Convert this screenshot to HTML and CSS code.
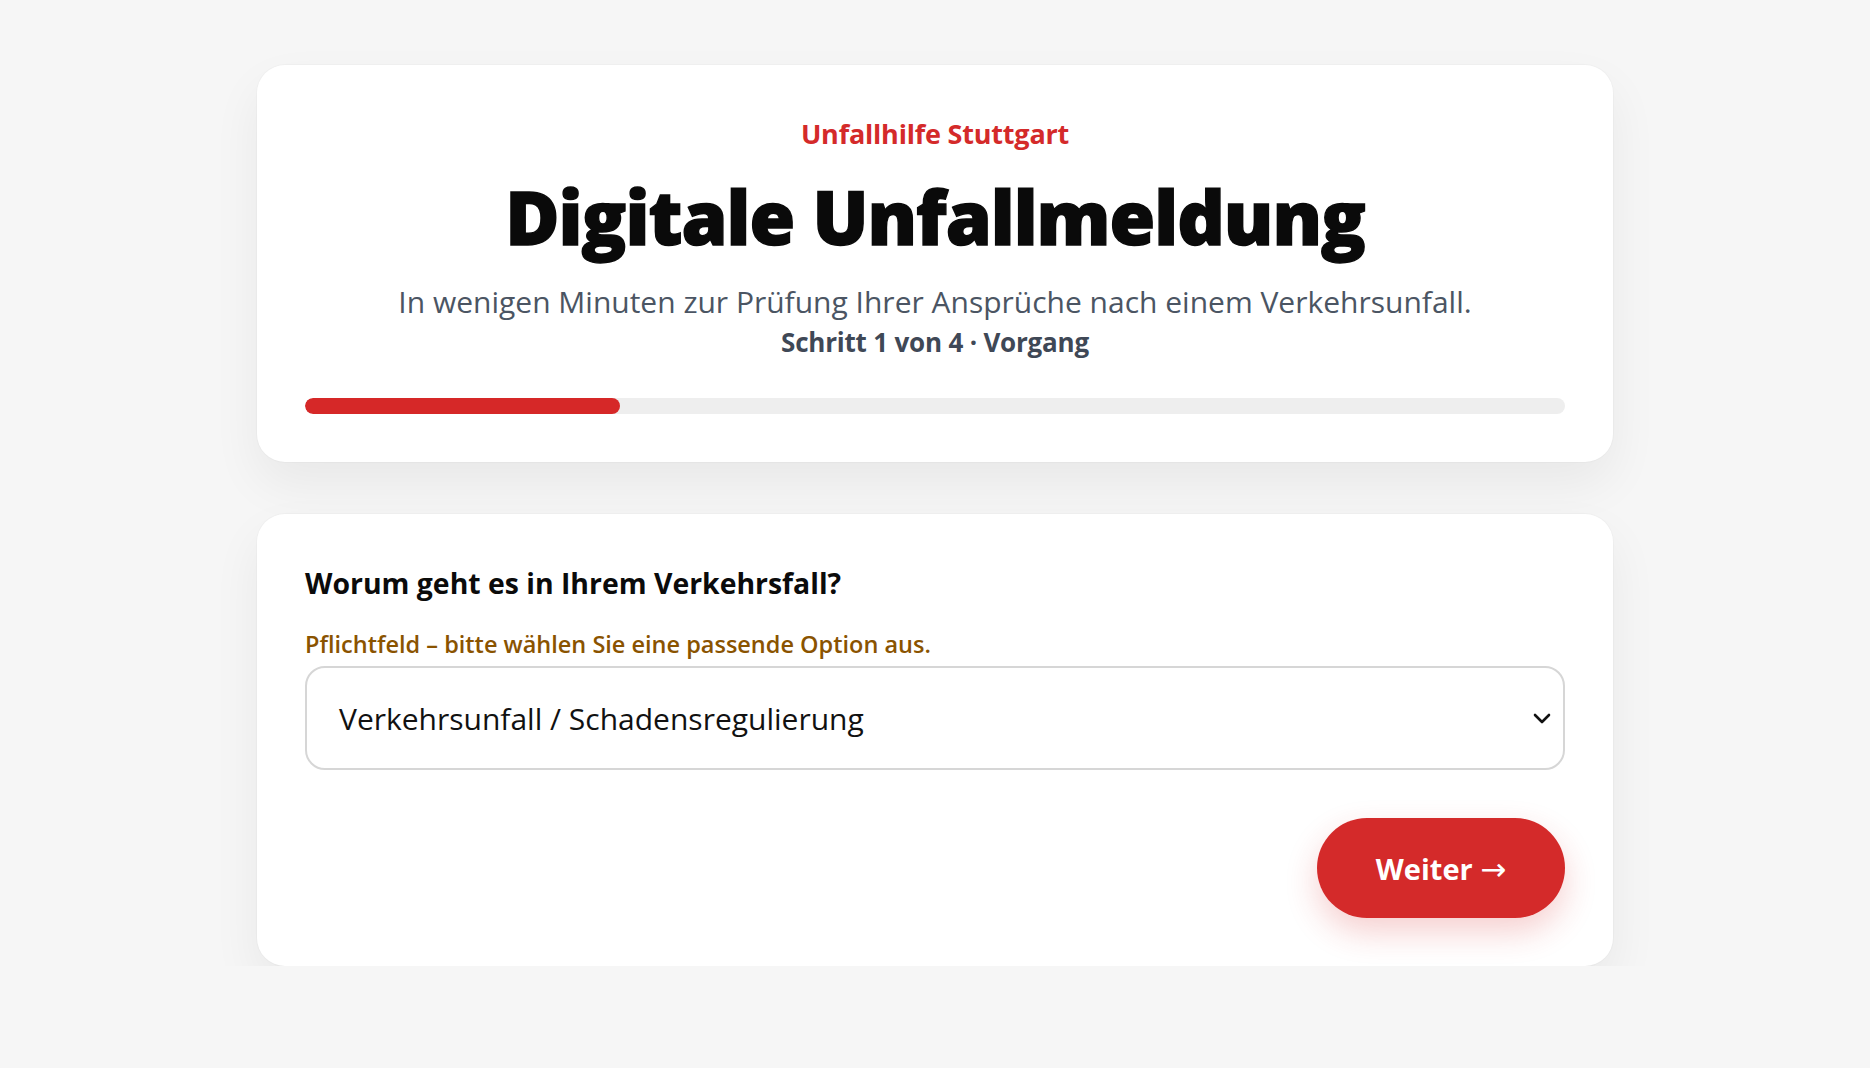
FILE: index.html
```html
<!DOCTYPE html>
<html lang="de">
<head>
<meta charset="utf-8">
<title>Digitale Unfallmeldung</title>
<link rel="stylesheet" href="styles.css">
</head>
<body>
<main class="page">
  <section class="card header-card">
    <p class="brand">Unfallhilfe Stuttgart</p>
    <h1 class="title">Digitale Unfallmeldung</h1>
    <p class="lead">In wenigen Minuten zur Prüfung Ihrer Ansprüche nach einem Verkehrsunfall.</p>
    <p class="step">Schritt 1 von 4 · Vorgang</p>
    <div class="progress"><div class="progress-fill" style="width:25%"></div></div>
  </section>
  <section class="card form-card">
    <h2 class="question">Worum geht es in Ihrem Verkehrsfall?</h2>
    <p class="hint">Pflichtfeld – bitte wählen Sie eine passende Option aus.</p>
    <div class="select">
      <span class="select-value">Verkehrsunfall / Schadensregulierung</span>
      <svg class="chevron" width="18" height="11" viewBox="0 0 18 11"><path d="M2 2 L9 9 L16 2" fill="none" stroke="#111" stroke-width="2.6" stroke-linecap="round" stroke-linejoin="round"/></svg>
    </div>
    <div class="actions">
      <button class="btn-next">Weiter <span class="arrow">→</span></button>
    </div>
  </section>
</main>
</body>
</html>
```
FILE: styles.css
```css
* { box-sizing: border-box; }
html, body { margin: 0; padding: 0; }
body {
  background: #f6f6f6;
  font-family: "Open Sans", "Noto Sans", sans-serif;
  color: #0b0b0b;
}
.page {
  width: 1356px;
  margin: 0 auto;
  padding-top: 65px;
  display: flex;
  flex-direction: column;
  gap: 52px;
}
.card {
  background: #fff;
  border-radius: 28px;
  padding: 48px;
  box-shadow: 0 22px 50px rgba(0, 0, 0, 0.06), 0 0 0 1px rgba(0,0,0,0.02);
}
.header-card {
  display: flex;
  flex-direction: column;
  align-items: center;
  text-align: center;
}
.brand {
  margin: 0;
  color: #d42a2a;
  font-weight: 700;
  font-size: 27px;
  line-height: 42px;
  letter-spacing: -0.2px;
}
.title {
  margin: 12px 0 0;
  font-weight: 800;
  font-size: 74px;
  line-height: 100px;
  letter-spacing: -1px;
  color: #0a0a0a;
  -webkit-text-stroke: 1.4px #0a0a0a;
}
.lead {
  margin: 13px 0 0;
  color: #4b5563;
  font-size: 30px;
  line-height: 44px;
}
.step {
  margin: 0;
  color: #3f4856;
  font-weight: 700;
  font-size: 26px;
  line-height: 36px;
  letter-spacing: -0.2px;
}
.progress {
  align-self: stretch;
  margin-top: 38px;
  height: 16px;
  border-radius: 8px;
  background: #eeeeee;
  overflow: hidden;
}
.progress-fill {
  height: 100%;
  background: #d62828;
  border-radius: 8px;
}
.form-card {
  display: flex;
  flex-direction: column;
}
.question {
  margin: 0;
  font-size: 28.4px;
  font-weight: 700;
  line-height: 42px;
}
.hint {
  margin: 24px 0 0;
  color: #8a5300;
  font-weight: 600;
  font-size: 23.5px;
  line-height: 32px;
}
.select {
  margin-top: 6px;
  height: 104px;
  border: 2px solid #d6d6d6;
  border-radius: 20px;
  padding: 0 12px 0 32px;
  display: flex;
  align-items: center;
  justify-content: space-between;
}
.select-value {
  font-size: 30px;
  color: #111;
}
.actions {
  margin-top: 48px;
  display: flex;
  justify-content: flex-end;
}
.btn-next {
  width: 248px;
  height: 100px;
  border: none;
  border-radius: 50px;
  background: #d42a2a;
  color: #fff;
  font-family: inherit;
  font-weight: 700;
  font-size: 29px;
  box-shadow: 0 14px 32px rgba(214, 40, 40, 0.22);
}
.arrow {
  font-family: "DejaVu Sans", sans-serif;
  font-weight: 400;
  font-size: 31px;
}
```
